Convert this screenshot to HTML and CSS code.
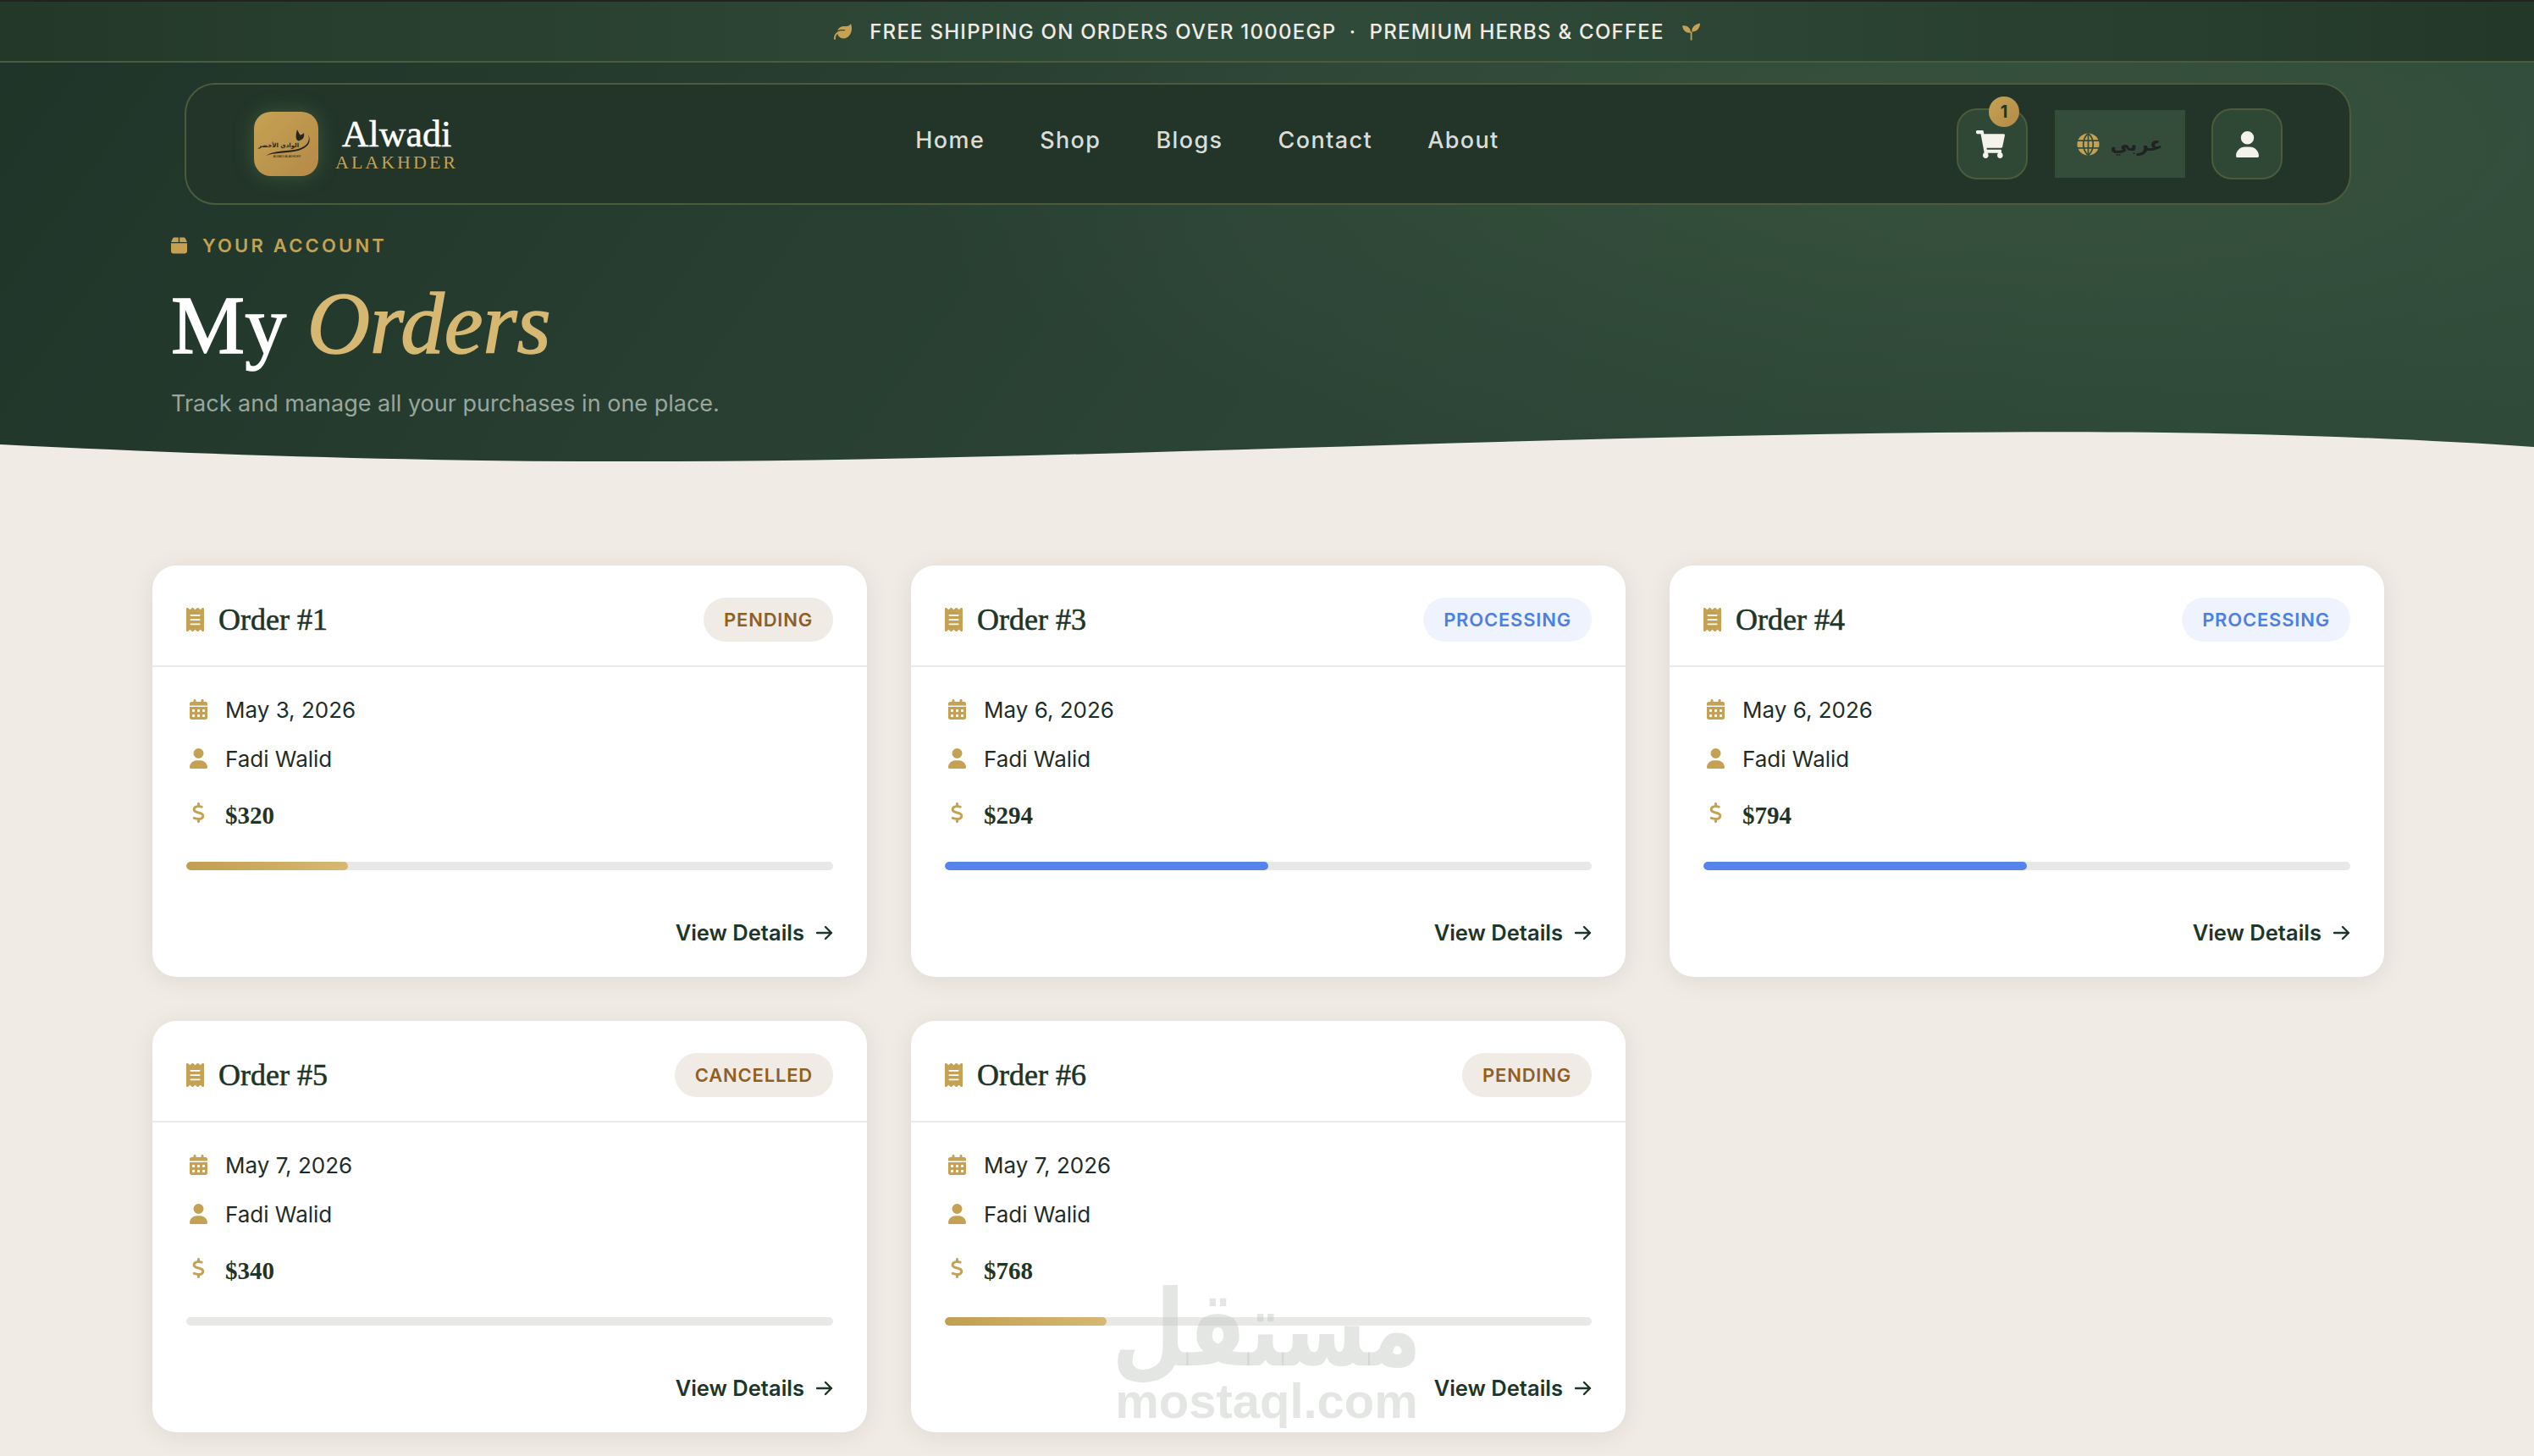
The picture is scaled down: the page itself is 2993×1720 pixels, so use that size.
FILE: index.html
```html
<!DOCTYPE html>
<html lang="en">
<head>
    <meta charset="UTF-8">
    <meta name="viewport" content="width=device-width, initial-scale=1.0">
    <title>My Orders - Alwadi Alakhder</title>
    <link rel="stylesheet" href="styles.css">
</head>
<body>
    <svg class="sprite" xmlns="http://www.w3.org/2000/svg">
        <symbol id="i-receipt" viewBox="0 0 384 512"><path d="M14 2.2C22.5-1.7 32.5-.3 39.6 5.8L80 40.4 120.4 5.8c9-7.7 22.3-7.7 31.2 0L192 40.4 232.4 5.8c9-7.7 22.2-7.7 31.2 0L304 40.4 344.4 5.8c7.1-6.1 17.1-7.5 25.6-3.6s14 12.4 14 21.8V488c0 9.4-5.5 17.9-14 21.8s-18.5 2.5-25.6-3.6L304 471.6l-40.4 34.6c-9 7.7-22.3 7.7-31.2 0L192 471.6l-40.4 34.6c-9 7.7-22.3 7.7-31.2 0L80 471.6 39.6 506.2c-7.1 6.1-17.1 7.5-25.6 3.6S0 497.4 0 488V24C0 14.6 5.5 6.1 14 2.2zM96 144c-8.8 0-16 7.2-16 16s7.2 16 16 16H288c8.8 0 16-7.2 16-16s-7.2-16-16-16H96zM80 352c0 8.8 7.2 16 16 16H288c8.8 0 16-7.2 16-16s-7.2-16-16-16H96c-8.8 0-16 7.2-16 16zM96 240c-8.8 0-16 7.2-16 16s7.2 16 16 16H288c8.8 0 16-7.2 16-16s-7.2-16-16-16H96z"/></symbol>
        <symbol id="i-calendar" viewBox="0 0 448 512"><path d="M128 0c17.7 0 32 14.3 32 32V64H288V32c0-17.7 14.3-32 32-32s32 14.3 32 32V64h48c26.5 0 48 21.5 48 48v48H0V112C0 85.5 21.5 64 48 64H96V32c0-17.7 14.3-32 32-32zM0 192H448V464c0 26.5-21.5 48-48 48H48c-26.5 0-48-21.5-48-48V192zm64 80v32c0 8.8 7.2 16 16 16h32c8.8 0 16-7.2 16-16V272c0-8.8-7.2-16-16-16H80c-8.8 0-16 7.2-16 16zm128 0v32c0 8.8 7.2 16 16 16h32c8.8 0 16-7.2 16-16V272c0-8.8-7.2-16-16-16H208c-8.8 0-16 7.2-16 16zm144-16c-8.8 0-16 7.2-16 16v32c0 8.8 7.2 16 16 16h32c8.8 0 16-7.2 16-16V272c0-8.8-7.2-16-16-16H336zM64 400v32c0 8.8 7.2 16 16 16h32c8.8 0 16-7.2 16-16V400c0-8.8-7.2-16-16-16H80c-8.8 0-16 7.2-16 16zm144-16c-8.8 0-16 7.2-16 16v32c0 8.8 7.2 16 16 16h32c8.8 0 16-7.2 16-16V400c0-8.8-7.2-16-16-16H208zm112 16v32c0 8.8 7.2 16 16 16h32c8.8 0 16-7.2 16-16V400c0-8.8-7.2-16-16-16H336c-8.8 0-16 7.2-16 16z"/></symbol>
        <symbol id="i-user" viewBox="0 0 448 512"><path d="M224 256A128 128 0 1 0 224 0a128 128 0 1 0 0 256zm-45.7 48C79.8 304 0 383.8 0 482.3C0 498.7 13.3 512 29.7 512H418.3c16.4 0 29.7-13.3 29.7-29.7C448 383.8 368.2 304 269.7 304H178.3z"/></symbol>
        <symbol id="i-dollar" viewBox="0 0 320 512"><path d="M160 0c17.7 0 32 14.3 32 32V67.7c1.6 .2 3.1 .4 4.7 .7c.4 .1 .7 .1 1.1 .2l48 8.8c17.4 3.2 28.9 19.9 25.7 37.2s-19.9 28.9-37.2 25.7l-47.5-8.7c-31.3-4.6-58.9-1.5-78.3 6.2s-27.2 18.3-29 28.1c-2 10.7-.5 16.7 1.2 20.4c1.8 3.9 5.5 8.3 12.8 13.2c16.3 10.7 41.3 17.7 73.7 26.3l2.9 .8c28.6 7.6 63.6 16.8 89.6 33.8c14.2 9.3 27.6 21.9 35.9 39.5c8.5 17.9 10.3 37.9 6.4 59.2c-6.9 38-33.1 63.4-65.6 76.7c-13.7 5.6-28.6 9.2-44.4 11V480c0 17.7-14.3 32-32 32s-32-14.3-32-32V445.1c-.4-.1-.9-.1-1.3-.2l-.2 0 0 0c-24.4-3.8-64.5-14.3-91.5-26.3c-16.1-7.2-23.4-26.1-16.2-42.2s26.1-23.4 42.2-16.2c20.9 9.3 55.3 18.5 75.2 21.6c31.9 4.7 58.2 2 76-5.3c16.9-6.9 24.6-16.9 26.8-28.9c1.9-10.6 .4-16.7-1.3-20.4c-1.9-4-5.6-8.4-13-13.3c-16.4-10.7-41.5-17.7-74-26.3l-2.8-.7 0 0C119.4 279.3 84.4 270 58.4 253c-14.2-9.3-27.5-22-35.8-39.6c-8.4-17.9-10.1-37.9-6.1-59.2C23.7 116 52.3 91.2 84.8 78.3c13.3-5.3 27.9-8.9 43.2-11V32c0-17.7 14.3-32 32-32z"/></symbol>
        <symbol id="i-arrow" viewBox="0 0 20 18"><path d="M1 9H18M11 2l7 7-7 7" fill="none" stroke="currentColor" stroke-width="2.4" stroke-linecap="round" stroke-linejoin="round"/></symbol>
    </svg>

    <header class="hero">
        <div class="topbar">
            <svg class="topbar-icon" viewBox="0 0 512 512"><path d="M272 96c-78.6 0-145.1 51.5-167.7 122.5c33.6-17 71.5-26.5 111.7-26.5h88c8.8 0 16 7.2 16 16s-7.2 16-16 16H288 216s0 0 0 0c-16.6 0-32.7 1.9-48.3 5.4c-25.9 5.9-49.9 16.4-71.4 30.7c0 0 0 0 0 0C38.3 298.8 0 364.9 0 440v16c0 13.3 10.7 24 24 24s24-10.7 24-24V440c0-48.7 20.7-92.5 53.8-123.2C121.6 392.3 190.3 448 272 448l1 0c132.1-.7 239-130.9 239-291.4c0-42.6-7.5-83.1-21.1-119.6c-2.6-6.9-12.7-6.6-16.2-.1C455.9 72.1 418.7 96 376 96L272 96z"/></svg>
            <span>FREE SHIPPING ON ORDERS OVER 1000EGP &nbsp;·&nbsp; PREMIUM HERBS &amp; COFFEE</span>
            <svg class="topbar-icon" viewBox="0 0 21 20"><path d="M0 3C5 2 10 5 10 11C5 12 1 9 0 3zM21 0C21 6 17 10 11.500 10C10.500 5 15 1 21 0zM9.700 10h1.800v10h-1.800z"/></svg>
        </div>

        <nav class="navbar">
            <a class="brand" href="#">
                <span class="brand-logo">
                    <svg viewBox="0 0 76 76">
                        <path d="M51 21c-1 4-2 7-1 11 1 2 3 3 4 2 3-1 6-3 5-9-2 2-4 3-5 2-1-2-2-4-3-6z" fill="#26261e"/>
                        <path d="M64 27c3 8-2 14-12 17-11 3-28 1-38 8 9-4 26-3 38-6 10-3 17-9 12-19z" fill="#26261e"/>
                        <text x="29" y="42" class="logo-ar">الوادي الأخضر</text>
                        <text x="39" y="54" class="logo-en">ALWADI ALAKHDER</text>
                    </svg>
                </span>
                <span class="brand-text">
                    <span class="brand-name">Alwadi</span>
                    <span class="brand-sub">ALAKHDER</span>
                </span>
            </a>

            <div class="nav-links">
                <a href="#">Home</a>
                <a href="#">Shop</a>
                <a href="#">Blogs</a>
                <a href="#">Contact</a>
                <a href="#">About</a>
            </div>

            <div class="nav-actions">
                <button class="icon-btn">
                    <svg class="cart-icon" viewBox="0 0 576 512" preserveAspectRatio="none"><path d="M528.12 301.319l47.273-208C578.806 78.301 567.391 64 551.99 64H159.208l-9.166-44.81C147.758 8.021 137.93 0 126.529 0H24C10.745 0 0 10.745 0 24v16c0 13.255 10.745 24 24 24h69.883l70.248 343.435C147.325 417.1 136 435.222 136 456c0 30.928 25.072 56 56 56s56-25.072 56-56c0-15.674-6.447-29.835-16.824-40h209.647C430.447 426.165 424 440.326 424 456c0 30.928 25.072 56 56 56s56-25.072 56-56c0-22.172-12.888-41.332-31.579-50.405l5.517-24.276c3.413-15.018-8.002-29.319-23.403-29.319H218.117l-6.545-32h293.145c11.206 0 20.92-7.754 23.403-18.681z"/></svg>
                    <span class="cart-count">1</span>
                </button>
                <button class="lang-btn">
                    <svg class="globe-icon" viewBox="0 0 28 28">
                        <circle cx="14" cy="14" r="13.500" fill="#c5a253"/>
                        <path d="M1 9.500h26M1 18.500h26M14 0v28M14 .5c-8 7-8 20 0 27M14 .5c8 7 8 20 0 27" fill="none" stroke="#334d3a" stroke-width="1.800"/>
                    </svg>
                    <span class="lang-label" lang="ar">عربي</span>
                </button>
                <button class="icon-btn">
                    <svg class="user-icon"><use href="#i-user"/></svg>
                </button>
            </div>
        </nav>

        <div class="hero-text">
            <div class="eyebrow">
                <svg viewBox="0 0 448 512"><path d="M50.7 58.5L0 160H208V32H93.7C75.5 32 58.9 42.3 50.7 58.5zM240 160H448L397.3 58.5C389.1 42.3 372.5 32 354.3 32H240V160zm208 32H0V416c0 35.3 28.7 64 64 64H384c35.3 0 64-28.7 64-64V192z"/></svg>
                YOUR ACCOUNT
            </div>
            <h1>My <em>Orders</em></h1>
            <p>Track and manage all your purchases in one place.</p>
        </div>

        <svg class="wave" viewBox="0 0 2993 546" preserveAspectRatio="none"><path d="M0 525C300 540 550 546 800 545C1300 543 1900 510 2440 510C2650 510 2850 518 2993 528V546H0z"/></svg>
    </header>

    <main class="orders">
        <article class="card">
            <div class="card-head">
                <h2><svg class="head-icon"><use href="#i-receipt"/></svg>Order #1</h2>
                <span class="badge pending">PENDING</span>
            </div>
            <div class="card-body">
                <div class="row"><span class="row-icon"><svg><use href="#i-calendar"/></svg></span>May 3, 2026</div>
                <div class="row"><span class="row-icon"><svg><use href="#i-user"/></svg></span>Fadi Walid</div>
                <div class="row price"><span class="row-icon"><svg class="dollar"><use href="#i-dollar"/></svg></span>$320</div>
                <div class="track"><div class="fill gold" style="width: 25%"></div></div>
                <a class="details" href="#">View Details <svg><use href="#i-arrow"/></svg></a>
            </div>
        </article>

        <article class="card">
            <div class="card-head">
                <h2><svg class="head-icon"><use href="#i-receipt"/></svg>Order #3</h2>
                <span class="badge processing">PROCESSING</span>
            </div>
            <div class="card-body">
                <div class="row"><span class="row-icon"><svg><use href="#i-calendar"/></svg></span>May 6, 2026</div>
                <div class="row"><span class="row-icon"><svg><use href="#i-user"/></svg></span>Fadi Walid</div>
                <div class="row price"><span class="row-icon"><svg class="dollar"><use href="#i-dollar"/></svg></span>$294</div>
                <div class="track"><div class="fill blue" style="width: 50%"></div></div>
                <a class="details" href="#">View Details <svg><use href="#i-arrow"/></svg></a>
            </div>
        </article>

        <article class="card">
            <div class="card-head">
                <h2><svg class="head-icon"><use href="#i-receipt"/></svg>Order #4</h2>
                <span class="badge processing">PROCESSING</span>
            </div>
            <div class="card-body">
                <div class="row"><span class="row-icon"><svg><use href="#i-calendar"/></svg></span>May 6, 2026</div>
                <div class="row"><span class="row-icon"><svg><use href="#i-user"/></svg></span>Fadi Walid</div>
                <div class="row price"><span class="row-icon"><svg class="dollar"><use href="#i-dollar"/></svg></span>$794</div>
                <div class="track"><div class="fill blue" style="width: 50%"></div></div>
                <a class="details" href="#">View Details <svg><use href="#i-arrow"/></svg></a>
            </div>
        </article>

        <article class="card">
            <div class="card-head">
                <h2><svg class="head-icon"><use href="#i-receipt"/></svg>Order #5</h2>
                <span class="badge pending">CANCELLED</span>
            </div>
            <div class="card-body">
                <div class="row"><span class="row-icon"><svg><use href="#i-calendar"/></svg></span>May 7, 2026</div>
                <div class="row"><span class="row-icon"><svg><use href="#i-user"/></svg></span>Fadi Walid</div>
                <div class="row price"><span class="row-icon"><svg class="dollar"><use href="#i-dollar"/></svg></span>$340</div>
                <div class="track"><div class="fill gold" style="width: 0%"></div></div>
                <a class="details" href="#">View Details <svg><use href="#i-arrow"/></svg></a>
            </div>
        </article>

        <article class="card">
            <div class="card-head">
                <h2><svg class="head-icon"><use href="#i-receipt"/></svg>Order #6</h2>
                <span class="badge pending">PENDING</span>
            </div>
            <div class="card-body">
                <div class="row"><span class="row-icon"><svg><use href="#i-calendar"/></svg></span>May 7, 2026</div>
                <div class="row"><span class="row-icon"><svg><use href="#i-user"/></svg></span>Fadi Walid</div>
                <div class="row price"><span class="row-icon"><svg class="dollar"><use href="#i-dollar"/></svg></span>$768</div>
                <div class="track"><div class="fill gold" style="width: 25%"></div></div>
                <a class="details" href="#">View Details <svg><use href="#i-arrow"/></svg></a>
            </div>
        </article>
    </main>

    <div class="watermark">
        <span class="wm-ar" lang="ar">مستقل</span>
        <span class="wm-en">mostaql.com</span>
    </div>
</body>
</html>
```

FILE: styles.css
```css
* {
    box-sizing: border-box;
}
html, body {
    margin: 0;
    height: 1720px;
    overflow: hidden;
}
body {
    position: relative;
    font-family: Inter, "Noto Sans", sans-serif;
    background-color: #f0ebe4;
    color: #1f3528;
}
a {
    color: inherit;
    text-decoration: none;
}
.sprite {
    display: none;
}

/* hero */
.hero {
    position: relative;
    height: 546px;
    border-top: 2px solid #222;
    background:
        radial-gradient(ellipse 1300px 400px at 78% 30%, rgba(78, 108, 76, 0.3), rgba(78, 108, 76, 0) 100%),
        linear-gradient(125deg, #1f3428 0%, #2b4335 50%, #2f4a39 100%);
}
.topbar {
    display: flex;
    justify-content: center;
    align-items: center;
    gap: 21px;
    height: 72px;
    border-bottom: 2px solid #4b5c3d;
    background: linear-gradient(90deg, #243829 0%, #2f4a39 45%, #2f4a39 55%, #243829 100%);
    color: #f0ebe4;
    font-size: 24px;
    font-weight: 500;
    letter-spacing: 1.25px;
    white-space: pre;
}
.topbar-icon {
    width: 21px;
    height: 21px;
    fill: #c5a253;
}
.navbar {
    position: relative;
    z-index: 1;
    display: flex;
    justify-content: space-between;
    align-items: center;
    width: 2559px;
    height: 144px;
    margin: 24px 0 0 218px;
    padding: 0 79px 0 80px;
    background: #223528;
    border: 2px solid #4b5c3d;
    border-radius: 36px;
}
.brand {
    display: flex;
    align-items: center;
    gap: 20px;
}
.brand-logo {
    display: block;
    width: 76px;
    height: 76px;
    border-radius: 20px;
    background: linear-gradient(135deg, #c5a253, #b48a48);
    box-shadow: 0 0 24px rgba(120, 150, 100, 0.35);
}
.logo-ar {
    font-family: "DejaVu Sans", sans-serif;
    font-size: 7px;
    font-weight: 700;
    text-anchor: middle;
    fill: #26261e;
}
.logo-en {
    font-family: "Liberation Sans", sans-serif;
    font-size: 3.500px;
    text-anchor: middle;
    fill: #26261e;
}
.brand-text {
    display: flex;
    flex-direction: column;
    align-items: center;
}
.brand-name {
    font-family: "Liberation Serif", serif;
    font-size: 44px;
    line-height: 44px;
    color: #fff;
    -webkit-text-stroke: 0.5px #fff;
}
.brand-sub {
    font-family: "Liberation Serif", serif;
    font-size: 22px;
    line-height: 22px;
    letter-spacing: 3px;
    color: #c5a253;
}
.nav-links {
    display: flex;
    gap: 65px;
    margin-top: -10px;
    font-size: 27px;
    font-weight: 500;
    letter-spacing: 1.4px;
    color: #dcdcd6;
}
.nav-actions {
    display: flex;
    align-items: center;
    gap: 31.500px;
}
.icon-btn {
    position: relative;
    display: flex;
    justify-content: center;
    align-items: center;
    width: 84px;
    height: 84px;
    padding: 0;
    background: #2f4836;
    border: 2px solid #4b5c3d;
    border-radius: 24px;
}
.cart-icon {
    width: 34px;
    height: 33px;
    margin-right: 5px;
    fill: #f5f2ec;
}
.user-icon {
    width: 27px;
    height: 31px;
    fill: #f5f2ec;
}
.cart-count {
    position: absolute;
    top: -16px;
    right: 8px;
    width: 36px;
    height: 36px;
    border-radius: 50%;
    background: linear-gradient(135deg, #c5a253, #b48a48);
    color: #223528;
    font-family: Inter, sans-serif;
    font-size: 20px;
    font-weight: 700;
    line-height: 36px;
    text-align: center;
}
.lang-btn {
    display: flex;
    align-items: center;
    gap: 13px;
    width: 154px;
    height: 80px;
    padding: 0 26px;
    background: #334d3a;
    border: none;
}
.globe-icon {
    width: 27px;
    height: 27px;
    flex-shrink: 0;
}
.lang-label {
    font-family: "DejaVu Sans", sans-serif;
    font-size: 23px;
    font-weight: 700;
    color: #222;
}
.hero-text {
    padding: 37px 0 0 202px;
}
.eyebrow {
    display: flex;
    align-items: center;
    gap: 18px;
    font-size: 22px;
    line-height: 22px;
    font-weight: 600;
    letter-spacing: 3.200px;
    color: #c5a253;
}
.eyebrow svg {
    width: 19px;
    height: 22px;
    fill: #c5a253;
}
.hero-text h1 {
    margin: 22px 0 0;
    font-family: "Liberation Serif", serif;
    font-size: 98px;
    line-height: 118px;
    font-weight: 400;
    color: #fff;
    -webkit-text-stroke: 1.500px #fff;
}
.hero-text h1 em {
    font-size: 103px;
    color: #d6b872;
    -webkit-text-stroke: 1.500px #d6b872;
}
.hero-text p {
    margin: 16px 0 0;
    font-size: 27px;
    line-height: 36px;
    color: #9aa69c;
}
.wave {
    position: absolute;
    left: 0;
    top: 0;
    width: 100%;
    height: 100%;
    fill: #f0ebe4;
}

/* order cards */
.orders {
    display: grid;
    grid-template-columns: repeat(3, 844px);
    gap: 52px;
    padding: 122px 0 0 180px;
}
.card {
    height: 486px;
    background: #fff;
    border-radius: 28px;
    box-shadow: 0 4px 30px rgba(31, 53, 40, 0.08);
}
.card-head {
    display: flex;
    justify-content: space-between;
    align-items: center;
    height: 120px;
    padding: 38px 40px 28px;
    border-bottom: 2px solid #eaeaea;
}
.card-head h2 {
    display: flex;
    align-items: center;
    gap: 17px;
    margin: 0;
    font-family: "Liberation Serif", serif;
    font-size: 36px;
    font-weight: 400;
    color: #1f3528;
    -webkit-text-stroke: 0.6px #1f3528;
}
.head-icon {
    width: 21px;
    height: 28px;
    fill: #c5a253;
    stroke: none;
}
.badge {
    padding: 0 24px;
    height: 52px;
    border-radius: 26px;
    font-size: 22px;
    font-weight: 600;
    line-height: 52px;
    letter-spacing: 0.8px;
}
.badge.pending {
    background: #f0ebe4;
    color: #8f5f24;
}
.badge.processing {
    background: #eef3fd;
    color: #4f80e0;
}
.card-body {
    padding: 32px 40px 0;
}
.row {
    display: flex;
    align-items: center;
    height: 36px;
    margin-bottom: 22px;
    font-size: 26px;
    color: #1f2d26;
}
.row-icon {
    display: flex;
    justify-content: center;
    width: 29px;
    margin-right: 17px;
}
.row-icon svg {
    width: 21px;
    height: 24px;
    fill: #c5a253;
}
.row-icon svg.dollar {
    width: 15px;
    height: 24px;
    margin-top: -6px;
}
.price {
    margin: 31px 0 0;
    font-family: "Liberation Serif", serif;
    font-size: 29px;
    font-weight: 700;
    color: #1f3528;
}
.track {
    height: 10px;
    margin-top: 37px;
    border-radius: 5px;
    background: #e8e9e7;
    overflow: hidden;
}
.fill {
    height: 100%;
    border-radius: 5px;
}
.fill.gold {
    background: linear-gradient(90deg, #c19f50, #d6b872);
}
.fill.blue {
    background: #5585ea;
}
.details {
    display: flex;
    justify-content: flex-end;
    align-items: center;
    gap: 14px;
    margin-top: 56px;
    font-size: 25.500px;
    line-height: 36px;
    font-weight: 600;
    color: #1f3528;
}
.details svg {
    width: 20px;
    height: 18px;
}

/* site watermark over the page */
.watermark {
    position: absolute;
    left: 1317px;
    top: 1514px;
    display: flex;
    flex-direction: column;
    align-items: center;
    width: 358px;
    color: rgba(190, 195, 190, 0.42);
}
.wm-ar {
    font-family: "DejaVu Sans", sans-serif;
    font-size: 100px;
    line-height: 112px;
    font-weight: 700;
    transform: scaleY(1.25);
}
.wm-en {
    font-family: "Liberation Sans", sans-serif;
    font-size: 58px;
    line-height: 58px;
    font-weight: 700;
}
```
